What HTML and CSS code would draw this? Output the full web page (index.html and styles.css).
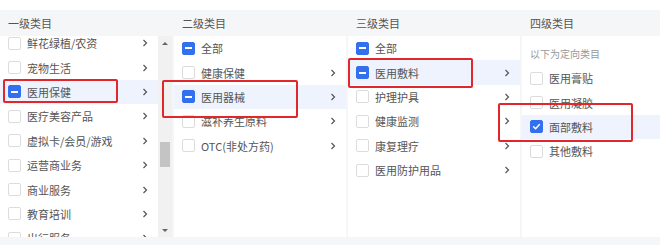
FILE: index.html
```html
<!DOCTYPE html>
<html lang="zh">
<head>
<meta charset="utf-8">
<link rel="stylesheet" href="styles.css">
</head>
<body>
<div class="page">
  <div class="topstrip"></div>
  <div class="cols">
    <section class="col">
      <div class="col-head">一级类目</div>
      <div class="col-body with-scroll">
        <div class="list shifted">
          <div class="row"><span class="cb"></span><span class="txt">鲜花绿植/农资</span><svg class="chev" viewBox="0 0 6 8"><path d="M1.5 1l3 3-3 3"/></svg></div>
          <div class="row"><span class="cb"></span><span class="txt">宠物生活</span><svg class="chev" viewBox="0 0 6 8"><path d="M1.5 1l3 3-3 3"/></svg></div>
          <div class="row active"><span class="cb ind"></span><span class="txt">医用保健</span><svg class="chev" viewBox="0 0 6 8"><path d="M1.5 1l3 3-3 3"/></svg></div>
          <div class="row"><span class="cb"></span><span class="txt">医疗美容产品</span><svg class="chev" viewBox="0 0 6 8"><path d="M1.5 1l3 3-3 3"/></svg></div>
          <div class="row"><span class="cb"></span><span class="txt">虚拟卡/会员/游戏</span><svg class="chev" viewBox="0 0 6 8"><path d="M1.5 1l3 3-3 3"/></svg></div>
          <div class="row"><span class="cb"></span><span class="txt">运营商业务</span><svg class="chev" viewBox="0 0 6 8"><path d="M1.5 1l3 3-3 3"/></svg></div>
          <div class="row"><span class="cb"></span><span class="txt">商业服务</span><svg class="chev" viewBox="0 0 6 8"><path d="M1.5 1l3 3-3 3"/></svg></div>
          <div class="row"><span class="cb"></span><span class="txt">教育培训</span><svg class="chev" viewBox="0 0 6 8"><path d="M1.5 1l3 3-3 3"/></svg></div>
          <div class="row"><span class="cb"></span><span class="txt">出行服务</span><svg class="chev" viewBox="0 0 6 8"><path d="M1.5 1l3 3-3 3"/></svg></div>
        </div>
        <div class="scrollbar">
          <span class="arrow up"></span>
          <span class="thumb"></span>
          <span class="arrow down"></span>
        </div>
      </div>
    </section>
    <section class="col">
      <div class="col-head">二级类目</div>
      <div class="col-body">
        <div class="list">
          <div class="row"><span class="cb ind"></span><span class="txt">全部</span></div>
          <div class="row"><span class="cb"></span><span class="txt">健康保健</span><svg class="chev" viewBox="0 0 6 8"><path d="M1.5 1l3 3-3 3"/></svg></div>
          <div class="row active"><span class="cb ind"></span><span class="txt">医用器械</span><svg class="chev" viewBox="0 0 6 8"><path d="M1.5 1l3 3-3 3"/></svg></div>
          <div class="row"><span class="cb"></span><span class="txt">滋补养生原料</span><svg class="chev" viewBox="0 0 6 8"><path d="M1.5 1l3 3-3 3"/></svg></div>
          <div class="row"><span class="cb"></span><span class="txt">OTC(非处方药)</span><svg class="chev" viewBox="0 0 6 8"><path d="M1.5 1l3 3-3 3"/></svg></div>
        </div>
      </div>
    </section>
    <section class="col">
      <div class="col-head">三级类目</div>
      <div class="col-body">
        <div class="list">
          <div class="row"><span class="cb ind"></span><span class="txt">全部</span></div>
          <div class="row active"><span class="cb ind"></span><span class="txt">医用敷料</span><svg class="chev" viewBox="0 0 6 8"><path d="M1.5 1l3 3-3 3"/></svg></div>
          <div class="row"><span class="cb"></span><span class="txt">护理护具</span><svg class="chev" viewBox="0 0 6 8"><path d="M1.5 1l3 3-3 3"/></svg></div>
          <div class="row"><span class="cb"></span><span class="txt">健康监测</span><svg class="chev" viewBox="0 0 6 8"><path d="M1.5 1l3 3-3 3"/></svg></div>
          <div class="row"><span class="cb"></span><span class="txt">康复理疗</span><svg class="chev" viewBox="0 0 6 8"><path d="M1.5 1l3 3-3 3"/></svg></div>
          <div class="row"><span class="cb"></span><span class="txt">医用防护用品</span><svg class="chev" viewBox="0 0 6 8"><path d="M1.5 1l3 3-3 3"/></svg></div>
        </div>
      </div>
    </section>
    <section class="col">
      <div class="col-head">四级类目</div>
      <div class="col-body">
        <div class="note">以下为定向类目</div>
        <div class="list">
          <div class="row"><span class="cb"></span><span class="txt">医用膏贴</span></div>
          <div class="row"><span class="cb"></span><span class="txt">医用凝胶</span></div>
          <div class="row active"><span class="cb checked"><svg viewBox="0 0 12 12"><path d="M2.8 6.2l2.2 2.2 4.2-4.6"/></svg></span><span class="txt">面部敷料</span></div>
          <div class="row"><span class="cb"></span><span class="txt">其他敷料</span></div>
        </div>
      </div>
    </section>
  </div>
  <div class="mark m1"></div>
  <div class="mark m2"></div>
  <div class="mark m3"></div>
  <div class="mark m4"></div>
</div>
</body>
</html>
```
FILE: styles.css
```css
* { box-sizing: border-box; }
html, body { margin: 0; padding: 0; }
body {
  width: 660px;
  height: 245px;
  overflow: hidden;
  background: #f5f6f7;
  font-family: "Noto Sans CJK SC", "Noto Sans", sans-serif;
  font-size: 11px;
  color: #555;
}
.page { position: relative; width: 660px; height: 245px; }
.topstrip { height: 10px; background: #fff; }
.cols {
  display: grid;
  grid-template-columns: 172px 172px 172px 1fr;
  column-gap: 2px;
}
.col { display: flex; flex-direction: column; }
.col-head {
  height: 26px;
  line-height: 26px;
  padding-left: 8px;
  color: #555;
  font-size: 11px;
}
.col-body {
  height: 201px;
  background: #fff;
  overflow: hidden;
}
.with-scroll { display: flex; }
.with-scroll .list { width: 158px; }
.shifted { margin-top: -5px; }
.row {
  height: 24.4px;
  display: flex;
  align-items: center;
  gap: 5px;
  padding: 0 10px 0 8px;
  color: #555;
  white-space: nowrap;
}
.row.active { background: #eef3fd; }
.txt { flex: 1; }
.cb {
  width: 13px;
  height: 13px;
  flex: none;
  border: 1px solid #dcdcdc;
  border-radius: 2px;
  background: #fff;
  display: flex;
  align-items: center;
  justify-content: center;
  margin-right: 1px;
}
.cb.ind { background: #3370f0; border-color: #3370f0; }
.cb.ind::after {
  content: "";
  width: 7px;
  height: 2px;
  background: #fff;
}
.cb.checked { background: #3370f0; border-color: #3370f0; }
.cb.checked svg { width: 11px; height: 11px; }
.cb.checked path { fill: none; stroke: #fff; stroke-width: 1.6; stroke-linecap: round; stroke-linejoin: round; }
.chev { width: 6px; height: 8px; flex: none; }
.chev path { fill: none; stroke: #555; stroke-width: 1.2; }
.scrollbar {
  width: 14px;
  background: #f1f1f1;
  display: flex;
  flex-direction: column;
  align-items: center;
  position: relative;
}
.arrow { width: 0; height: 0; border-left: 3px solid transparent; border-right: 3px solid transparent; }
.arrow.up { border-bottom: 3px solid #666; margin-top: 6px; }
.arrow.down { border-top: 3px solid #666; margin-top: auto; margin-bottom: 5px; }
.thumb {
  width: 10px;
  height: 25px;
  background: #c4c4c4;
  margin-top: 97px;
}
.note {
  padding: 10px 0 0 8px;
  height: 30px;
  line-height: 16px;
  font-size: 10px;
  color: #999;
}
.mark {
  position: absolute;
  border: 2px solid #e0282c;
  border-radius: 2px;
  pointer-events: none;
}
.m1 { left: 3px; top: 79px; width: 115px; height: 24px; }
.m2 { left: 162px; top: 80px; width: 136px; height: 38px; }
.m3 { left: 348px; top: 58px; width: 125px; height: 30px; }
.m4 { left: 498px; top: 103px; width: 135px; height: 39px; }
```
